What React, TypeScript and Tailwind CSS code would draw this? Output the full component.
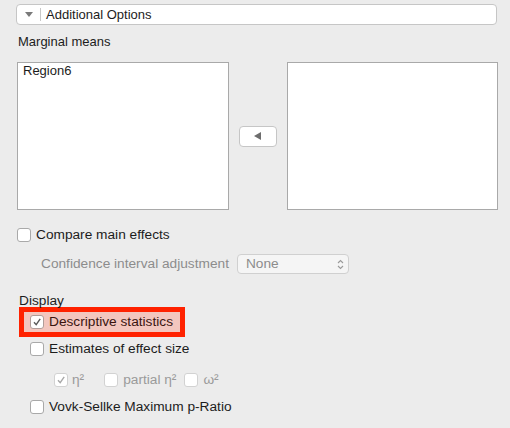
import React from 'react';

const Box: React.FC<{ checked?: boolean; disabled?: boolean; className?: string }> = ({ checked, disabled, className = '' }) => (
  <span
    className={`inline-flex w-[14px] h-[14px] shrink-0 items-center justify-center rounded-[3px] border bg-white ${
      disabled ? 'border-[#d2d2d2]' : 'border-[#a9a9a9]'
    } ${className}`}
  >
    {checked && (
      <svg width="10" height="10" viewBox="0 0 10 10">
        <path d="M2 5.2 L4.2 7.6 L8.2 1.8" fill="none" stroke={disabled ? '#a8a8a8' : '#5a5a5a'} strokeWidth="1.4" />
      </svg>
    )}
  </span>
);

const App: React.FC = () => {
  return (
    <div className="w-[510px] h-[428px] bg-[#ececec] pt-[4px] text-[13px] text-[#1c1c1c] leading-[16px] font-['Liberation_Sans',Helvetica,Arial,sans-serif] overflow-hidden">
      {/* Section header */}
      <div className="ml-[16px] w-[481px] h-[21px] rounded-[4px] border border-[#c6c6c6] bg-white flex items-center">
        <svg width="8" height="6" viewBox="0 0 8 6" className="ml-[8px]">
          <path d="M0 0 H8 L4 5 Z" fill="#7a7a7a" />
        </svg>
        <div className="ml-[7px] w-px h-[13px] bg-[#c8c8c8]" />
        <span className="ml-[5px]">Additional Options</span>
      </div>

      <div className="ml-[18px] mt-[9px]">Marginal means</div>

      {/* Lists */}
      <div className="mt-[12px] ml-[17px] flex items-center">
        <div className="w-[212px] h-[148px] bg-white border border-[#a9a9a9] px-[5px]">Region6</div>
        <button className="ml-[10px] w-[38px] h-[21px] rounded-[4px] border border-[#c6c6c6] bg-white flex items-center justify-center">
          <svg width="8" height="8" viewBox="0 0 8 8">
            <path d="M0 4 L7 0 V8 Z" fill="#6d6d6d" />
          </svg>
        </button>
        <div className="ml-[10px] w-[211px] h-[148px] bg-white border border-[#a9a9a9]" />
      </div>

      <div className="text-[13.7px]">
        {/* Compare main effects */}
        <div className="mt-[17px] ml-[17px] flex items-center h-[16px] gap-[5px]">
          <Box />
          <span>Compare main effects</span>
        </div>

        <div className="mt-[11px] ml-[41px] flex items-center h-[20px]">
          <span className="text-[#8c8c8c]">Confidence interval adjustment</span>
          <div className="ml-[8px] w-[112px] h-[20px] rounded-[4px] border border-[#d0d0d0] bg-[#f5f5f5] flex items-center justify-between pl-[8px] pr-[4px]">
            <span className="text-[#8c8c8c]">None</span>
            <svg width="7" height="11" viewBox="0 0 7 11">
              <path d="M1 4 L3.5 1.5 L6 4 M1 7 L3.5 9.5 L6 7" fill="none" stroke="#9a9a9a" strokeWidth="1.1" />
            </svg>
          </div>
        </div>

        {/* Display */}
        <div className="mt-[19px] ml-[19px]">Display</div>
        <div className="mt-[-2px] ml-[19px] w-[166px] h-[30px] border-[5px] border-[#ff2200] bg-[#f3c6be] flex items-center pl-[6px] gap-[5px]">
          <Box checked className="border-[#b09d99]" />
          <span className="text-[#3a1510]">Descriptive statistics</span>
        </div>

        <div className="mt-[4px] ml-[30px] flex items-center h-[16px] gap-[5px]">
          <Box />
          <span>Estimates of effect size</span>
        </div>

        <div className="mt-[15px] ml-[54px] flex items-center h-[16px] text-[#9a9a9a]">
          <Box checked disabled />
          <span className="ml-[4px]">η²</span>
          <Box disabled className="ml-[20px]" />
          <span className="ml-[5px]">partial η²</span>
          <Box disabled className="ml-[8px]" />
          <span className="ml-[5px]">ω²</span>
        </div>

        <div className="mt-[11px] ml-[30px] flex items-center h-[16px] gap-[5px]">
          <Box />
          <span>Vovk-Sellke Maximum p-Ratio</span>
        </div>
      </div>
    </div>
  );
};

export default App;
